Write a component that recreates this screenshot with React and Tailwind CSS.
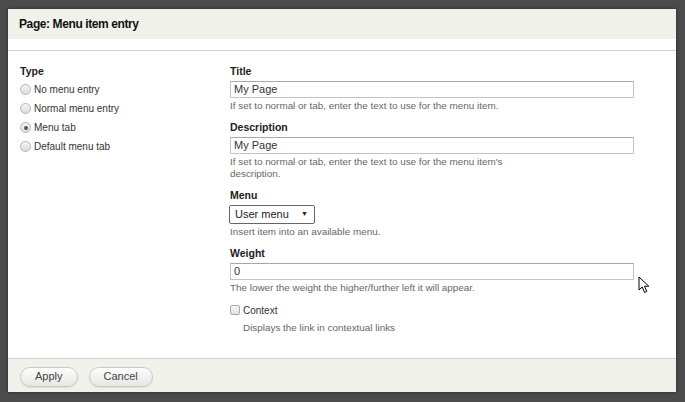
import React from 'react'

const font = { fontFamily: '"Liberation Sans", Arial, sans-serif' }

function Radio({ checked, label }) {
  return (
    <label className="flex items-center h-[19px] text-[10px] text-[#333]">
      <span className="w-[11px] h-[11px] rounded-full border border-[#b5b5b5] bg-gradient-to-b from-[#f4f4f4] to-[#dcdcdc] flex items-center justify-center mr-[3px]">
        {checked && <span className="w-[4px] h-[4px] rounded-full bg-[#555]" />}
      </span>
      {label}
    </label>
  )
}

function Field({ label, children, help, className = '' }) {
  return (
    <div className={`mb-[9px] ${className}`}>
      <div className="text-[10.5px] font-bold leading-[13px] text-[#222] mb-[3px]">{label}</div>
      {children}
      {help && (
        <div className="text-[9.9px] leading-[12px] text-[#666] mt-[2px] max-w-[290px]">{help}</div>
      )}
    </div>
  )
}

function TextInput({ value }) {
  return (
    <div className="h-[17px] w-[404px] border border-[#c4c4c4] border-t-[#a8a8a8] bg-white px-[3px] text-[11px] leading-[15px] text-[#333]">
      {value}
    </div>
  )
}

export default function App() {
  return (
    <div style={font} className="relative w-[685px] h-[402px] bg-[#4b4b4b] overflow-hidden pl-[8px] pt-[9px]">
      <div className="w-[668px] h-[383px] bg-white flex flex-col shadow-[0_0_3px_rgba(0,0,0,0.5)]">
        {/* header */}
        <div className="h-[30px] shrink-0 bg-[#f1f1ec] flex items-center px-[11px] text-[12px] font-bold tracking-[-0.4px] text-[#111]">
          Page: Menu item entry
        </div>
        <div className="h-[12px] shrink-0 border-b border-[#cfcfcf]" />

        {/* body */}
        <div className="flex-1 flex pt-[14px]">
          <div className="w-[222px] shrink-0 pl-[12px]">
            <div className="text-[10.5px] font-bold leading-[13px] text-[#222] mb-[2px]">Type</div>
            <Radio label="No menu entry" />
            <Radio label="Normal menu entry" />
            <Radio checked label="Menu tab" />
            <Radio label="Default menu tab" />
          </div>

          <div className="flex-1">
            <Field label="Title" help="If set to normal or tab, enter the text to use for the menu item.">
              <TextInput value="My Page" />
            </Field>
            <Field label="Description" help="If set to normal or tab, enter the text to use for the menu item's description.">
              <TextInput value="My Page" />
            </Field>
            <Field label="Menu" help="Insert item into an available menu." className="mb-[8px]">
              <div className="ml-[-1px] mb-[1px] h-[19px] w-[86px] border border-[#666] rounded-[2px] bg-white flex items-center justify-between pl-[5px] pr-[6px] text-[11px] text-[#222]">
                <span>User menu</span>
                <span className="text-[7px]">▼</span>
              </div>
            </Field>
            <Field label="Weight" help="The lower the weight the higher/further left it will appear." className="mb-[8px]">
              <TextInput value="0" />
            </Field>
            <div className="flex items-center h-[14px]">
              <span className="w-[10px] h-[10px] border border-[#a8a8a8] rounded-[2px] bg-gradient-to-b from-[#f8f8f8] to-[#e0e0e0] mr-[3px]" />
              <span className="text-[10px] text-[#333]">Context</span>
            </div>
            <div className="pl-[13px] mt-[5px] text-[9.9px] leading-[12px] text-[#666]">
              Displays the link in contextual links
            </div>
          </div>
        </div>

        {/* footer */}
        <div className="h-[34px] shrink-0 border-t border-[#d2d2d2] bg-[#f1f1ec] flex items-center gap-[11px] pl-[12px] pt-[2px]">
          <button className="h-[20px] px-[14px] rounded-full border border-[#c8c8c8] bg-gradient-to-b from-[#fdfdfd] to-[#e6e6e3] text-[11px] text-[#444] shadow-[0_1px_1px_rgba(0,0,0,0.08)]">
            Apply
          </button>
          <button className="h-[20px] px-[14px] rounded-full border border-[#c8c8c8] bg-gradient-to-b from-[#fdfdfd] to-[#e6e6e3] text-[11px] text-[#444] shadow-[0_1px_1px_rgba(0,0,0,0.08)]">
            Cancel
          </button>
        </div>
      </div>

      {/* mouse pointer */}
      <svg className="absolute left-[638px] top-[276px]" width="13" height="18" viewBox="0 0 13 18">
        <path d="M1 1 L1 14 L4.2 11 L6.6 16.5 L8.8 15.5 L6.5 10.2 L10.8 10.2 Z" fill="#fff" stroke="#000" strokeWidth="1" strokeLinejoin="round" />
      </svg>
    </div>
  )
}
